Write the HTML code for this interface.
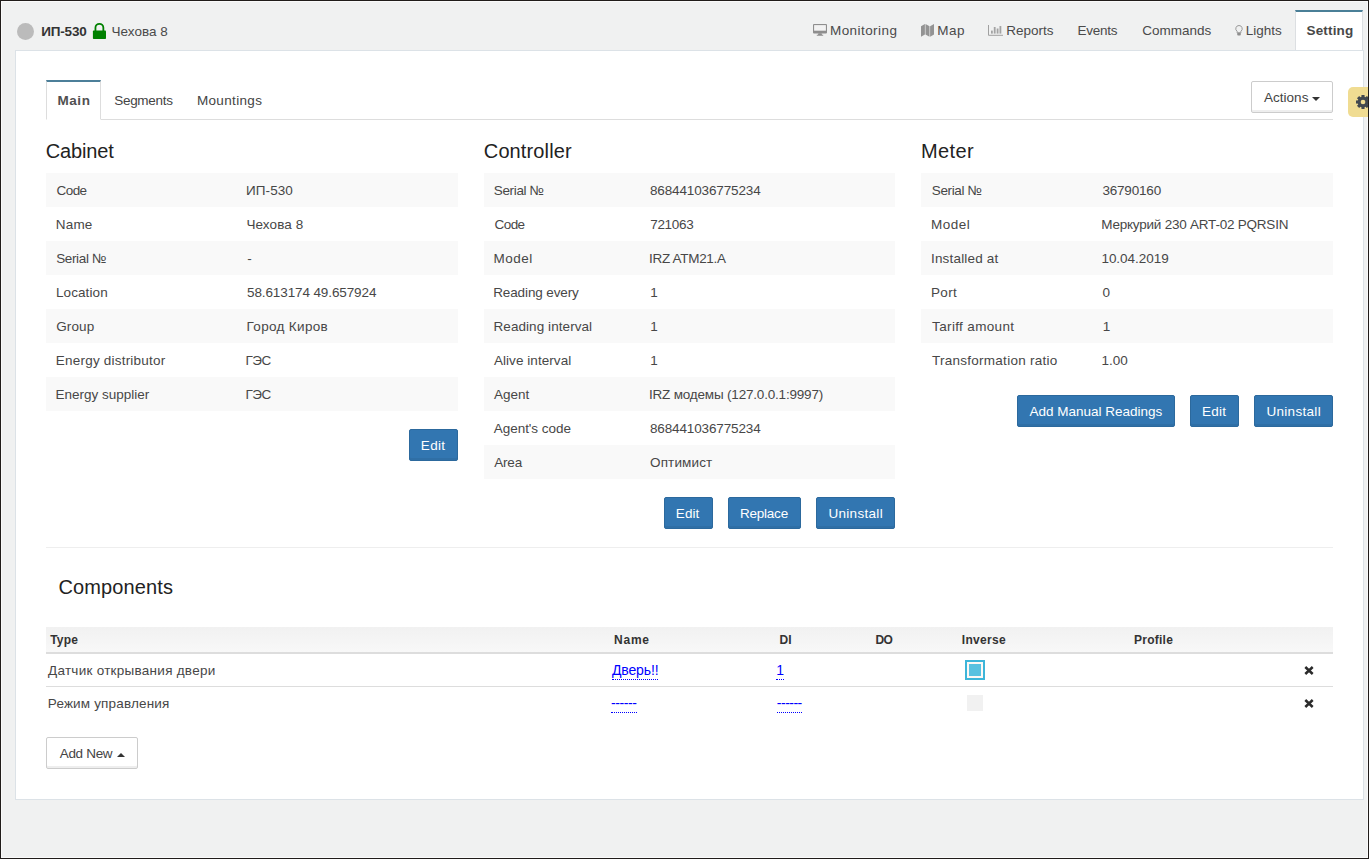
<!DOCTYPE html>
<html lang="en">
<head>
<meta charset="utf-8">
<title>ИП-530 Чехова 8 — Setting</title>
<style>
*{box-sizing:border-box;margin:0;padding:0}
html,body{width:1369px;height:859px;overflow:hidden}
body{background:#f0f1f1;font-family:"Liberation Sans","DejaVu Sans",sans-serif;font-size:13.5px;color:#3a3a3a;position:relative}
#frame{position:absolute;left:0;top:0;width:1369px;height:859px;border:1px solid #201c1a;box-shadow:inset 0 0 0 1px #fafafa;pointer-events:none;z-index:50}
a{text-decoration:none;color:inherit}
/* header */
#hdr{position:absolute;left:0;top:0;width:1369px;height:51px}
#dot{position:absolute;left:16.9px;top:22.9px;width:17.5px;height:17.5px;border-radius:50%;background:#bbb}
#devcode{position:absolute;left:41px;top:23px;font-weight:bold;font-size:13.5px;line-height:18px;color:#333}
#lock{position:absolute;left:92px;top:22px;width:15px;height:18px}
#devname{position:absolute;left:112px;top:23px;font-size:13.5px;line-height:18px;color:#4a4a4a}
#nav{position:absolute;left:0;top:10px;height:41px;width:1369px;list-style:none}
#nav li{position:absolute;top:0;height:41px;font-size:13.5px;color:#4a4a4a;white-space:nowrap;border-top:2px solid transparent}
#nav li span{position:absolute;top:10px;line-height:18px}
#nav li.act{background:#fff;height:40px;border:1px solid #dcdfe2;border-top:2px solid #4a7f97;border-bottom:none;font-weight:bold;color:#484848}
#nav svg{position:absolute}
/* panel */
#panel{position:absolute;left:15px;top:50px;width:1349px;height:750px;background:#fff;border:1px solid #dce2e7}
#gear{position:absolute;left:1348px;top:87px;width:20px;height:30px;overflow:hidden;background:#f0dc92;border-radius:5px 0 0 5px;z-index:60}
#gear svg{position:absolute;left:7.2px;top:6.9px}
/* tabs */
#tabs{position:absolute;left:46px;top:80px;width:1287px;height:40px;border-bottom:1px solid #ddd;list-style:none}
#tabs li{position:absolute;top:0;height:40px;font-size:13.5px;color:#444;border:1px solid transparent;border-top:2px solid transparent;white-space:nowrap}
#tabs li span{position:absolute;top:10px;line-height:18px}
#tabs li.act{background:#fff;border:1px solid #ddd;border-top:2px solid #4c7f99;border-bottom:1px solid #fff;font-weight:bold;color:#505050}
.btnw{position:absolute;background:#fff;border:1px solid #ccc;border-radius:2px;color:#444;font-size:13.5px;text-align:center;box-shadow:inset 0 -2px 0 #eee}
.btnw>span:first-child{position:relative;top:1px}
.caret{position:relative;top:2px;display:inline-block;width:0;height:0;border-left:4px solid transparent;border-right:4px solid transparent;vertical-align:middle;margin-left:4px}
.caret.dn{border-top:4px solid #333}
.caret.up{border-bottom:4px solid #333}
h3{position:absolute;font-weight:normal;font-size:20px;line-height:24px;color:#222}
table.kv{position:absolute;border-collapse:collapse;table-layout:fixed}
table.kv td{height:34px;padding:0 10px;font-size:13.5px;color:#474747;vertical-align:middle;white-space:nowrap}
table.kv tr:nth-child(odd) td{background:#f9f9f9}
.btn{position:absolute;height:32px;line-height:32px;background:#3276b1;border:1px solid #2c699d;border-radius:2px;box-shadow:inset 0 -2px 0 rgba(0,0,0,.06);color:#fff;font-size:13.5px;text-align:center;white-space:nowrap}
#hr{position:absolute;left:46px;top:547px;width:1287px;height:1px;background:#eee}
/* components */
#ctable{position:absolute;left:46px;top:627px;width:1287px;border-collapse:collapse;table-layout:fixed}
#ctable th{height:26px;text-align:left;font-size:12px;font-weight:bold;color:#333;padding:0 4px;background:linear-gradient(#f1f1f1,#f8f8f8);border-bottom:2px solid #ddd;padding-top:1px}
#ctable td{height:33px;font-size:13.5px;color:#474747;padding:0 2px;border-bottom:1px solid #ddd;vertical-align:middle}
#ctable tr:last-child td{border-bottom:none}
#ctable td span{position:relative;top:1px}
#ctable td a{position:relative;top:0}
#ctable a.ed{color:#00f;border-bottom:1px dotted #00f;font-size:14px;padding-bottom:1px}
.cb,.xi{display:block;position:relative}
#cb1{left:5px;top:0}
#cb2{left:7px;top:0}
.xi{left:6.1px;top:0.9px}
/*LS-START*/
#k1{letter-spacing:-0.58px;position:relative;left:0.6px}
#k2{letter-spacing:0.05px;position:relative;left:-0.9px}
#k3{letter-spacing:0.17px;position:relative;left:-0.2px}
#k4{letter-spacing:0.11px;position:relative;left:-0.6px}
#k5{letter-spacing:-0.36px;position:relative;left:0.2px}
#k6{position:relative;left:0.2px}
#k7{letter-spacing:0.11px;position:relative;left:-0.1px}
#k8{letter-spacing:-0.11px}
#k9{letter-spacing:0.12px;position:relative;left:0.2px}
#k10{letter-spacing:0.33px;position:relative;left:-0.4px}
#k11{letter-spacing:0.21px;position:relative;left:-0.2px}
#k12{letter-spacing:-0.60px;position:relative;left:-1.4px}
#k13{position:relative;left:-0.5px}
#k14{letter-spacing:-0.60px;position:relative;left:-1.4px}
#k15{letter-spacing:-0.36px;position:relative;left:-0.2px}
#k16{letter-spacing:-0.14px}
#k17{letter-spacing:-0.58px;position:relative;left:0.6px}
#k18{letter-spacing:-0.30px;position:relative;left:0.2px}
#k19{letter-spacing:0.50px;position:relative;left:-0.5px}
#k20{letter-spacing:-0.30px;position:relative;left:-1.0px}
#k21{letter-spacing:-0.12px;position:relative;left:-0.8px}
#k22{position:relative;left:0.2px}
#k23{letter-spacing:0.07px;position:relative;left:-0.5px}
#k24{position:relative;left:0.2px}
#k25{letter-spacing:0.06px;position:relative;left:-0.1px}
#k26{position:relative;left:0.2px}
#k28{letter-spacing:-0.19px;position:relative;left:-1.0px}
#k29{letter-spacing:-0.05px;position:relative;left:-0.2px}
#k30{letter-spacing:-0.14px}
#k31{letter-spacing:-0.17px;position:relative;left:0.2px}
#k32{letter-spacing:0.14px}
#k33{letter-spacing:-0.36px;position:relative;left:0.8px}
#k34{letter-spacing:-0.18px;position:relative;left:0.4px}
#k35{letter-spacing:0.50px}
#k36{letter-spacing:-0.22px;position:relative;left:-0.8px}
#k37{letter-spacing:0.18px}
#k38{letter-spacing:-0.03px;position:relative;left:-0.6px}
#k39{letter-spacing:0.33px}
#k40{position:relative;left:0.5px}
#k41{letter-spacing:0.35px;position:relative;left:1.1px}
#k42{position:relative;left:0.8px}
#k43{letter-spacing:0.26px;position:relative;left:1.0px}
#k44{position:relative;left:-0.5px}
#h1{letter-spacing:-0.18px;position:relative;left:0.2px}
#h2{letter-spacing:-0.01px;position:relative;left:-0.4px}
#n1{letter-spacing:0.43px;margin-left:-1.0px}
#n2{letter-spacing:0.55px;margin-left:-0.8px}
#n3{letter-spacing:0.01px;margin-left:-0.8px}
#n4{letter-spacing:-0.25px;margin-left:-0.6px}
#n5{margin-left:0.2px}
#n6{margin-left:-1.2px}
#n7{letter-spacing:0.17px;margin-left:-0.5px}
#t1{letter-spacing:0.58px;margin-left:0.4px}
#t2{letter-spacing:-0.29px;margin-left:-0.8px}
#t3{letter-spacing:0.34px;margin-left:-2.1px}
#g1{letter-spacing:-0.15px;position:relative;left:-0.3px}
#g2{letter-spacing:0.12px;position:relative;left:-0.2px}
#g3{letter-spacing:0.38px}
#g4{letter-spacing:0.11px;position:relative;left:-0.5px}
#b0{letter-spacing:0.03px;position:relative;left:0.2px}
#b1{letter-spacing:0.33px;position:relative;left:-0.4px}
#b2{letter-spacing:0.08px;position:relative;left:-0.9px}
#b3{letter-spacing:-0.21px;position:relative;left:-0.6px}
#b4{letter-spacing:0.31px;position:relative;left:0.2px}
#b5{letter-spacing:-0.01px;position:relative;left:-0.1px}
#b6{letter-spacing:0.25px;position:relative;left:-0.4px}
#b7{letter-spacing:0.31px;position:relative;left:0.2px}
#b9{letter-spacing:-0.33px}
#c1{letter-spacing:0.17px;position:relative;left:0.2px}
#c2{letter-spacing:0.75px;position:relative;left:0.1px}
#c3{position:relative;left:0.5px}
#c4{letter-spacing:-0.60px;position:relative;left:0.5px}
#c5{letter-spacing:0.32px;position:relative;left:-0.2px}
#c6{letter-spacing:0.25px}
#c7{letter-spacing:0.27px}
#c8{letter-spacing:0.17px;position:relative;left:-0.2px}
#c9{letter-spacing:-0.12px;position:relative;left:-0.1px}
#c10{position:relative;left:-0.8px}
#c11{letter-spacing:-0.40px;position:relative;left:-1.0px}
#c12{letter-spacing:-0.50px;position:relative;left:-0.2px}
/*LS-END*/
</style>
</head>
<body>
<div id="frame"></div>
<div id="hdr">
  <div id="dot"></div>
  <div id="devcode"><span id="h1">ИП-530</span></div>
  <svg id="lock" viewBox="0 0 15 18"><path d="M3.45 9.5V5.8a3.95 3.95 0 0 1 7.9 0V9.5" fill="none" stroke="#008000" stroke-width="1.8"/><rect x="0.9" y="8.6" width="13.1" height="8.4" rx="0.8" fill="#008000"/></svg>
  <div id="devname"><span id="h2">Чехова 8</span></div>
  <ul id="nav">
    <li style="left:801px;width:108px"><svg style="left:12px;top:12px" width="14" height="12" viewBox="0 0 14 12"><path d="M1 0h12a1 1 0 0 1 1 1v7.4a1 1 0 0 1-1 1h-12a1 1 0 0 1-1-1v-7.4a1 1 0 0 1 1-1z" fill="#8e8e8e"/><rect x="1.1" y="1.1" width="11.8" height="5.6" fill="#f2f2f2"/><path d="M5.4 9.2h3.2l0.4 1.5h1.2v1.1h-6.4v-1.1h1.2z" fill="#8e8e8e"/></svg><span id="n1" style="left:30px">Monitoring</span></li>
    <li style="left:909px;width:67px"><svg style="left:12px;top:12px" width="13" height="13" viewBox="0 0 13 13"><path d="M0 2.3l3.9-2.3v10.4l-3.9 2.3zM4.5 0l4 2.3v10.4l-4-2.3zM9.1 2.3l3.9-2.3v10.4l-3.9 2.3z" fill="#939393"/></svg><span id="n2" style="left:29px">Map</span></li>
    <li style="left:976px;width:89px"><svg style="left:12px;top:13px" width="15" height="11" viewBox="0 0 15 11"><path d="M0.5 0v10.3h14.5" fill="none" stroke="#a0a0a0" stroke-width="1"/><rect x="3" y="5.6" width="1.8" height="3" fill="#a3a3a3"/><rect x="5.8" y="2" width="1.8" height="6.6" fill="#a3a3a3"/><rect x="8.7" y="3.5" width="1.8" height="5.1" fill="#a3a3a3"/><rect x="11.5" y="1" width="1.8" height="7.6" fill="#a3a3a3"/></svg><span id="n3" style="left:31px">Reports</span></li>
    <li style="left:1066px;width:63px"><span id="n4" style="left:12px">Events</span></li>
    <li style="left:1130px;width:93px"><span id="n5" style="left:12px">Commands</span></li>
    <li style="left:1223px;width:71px"><svg style="left:12px;top:13px" width="8" height="11" viewBox="0 0 8 11"><path d="M4 0.5a3.2 3.2 0 0 0-1.9 5.8v1.5h3.8v-1.5a3.2 3.2 0 0 0-1.9-5.8z" fill="none" stroke="#999" stroke-width="1"/><rect x="2.2" y="7.8" width="3.6" height="2.7" rx="0.9" fill="#8e8e8e"/></svg><span id="n6" style="left:24px">Lights</span></li>
    <li class="act" style="left:1295px;width:68px"><span id="n7" style="left:11px">Setting</span></li>
  </ul>
</div>
<div id="panel"></div>
<div id="gear"><svg width="16" height="16" viewBox="-8 -8 16 16"><g fill="#434950"><rect x="-1.55" y="-7" width="3.1" height="3" transform="rotate(0)"/><rect x="-1.55" y="-7" width="3.1" height="3" transform="rotate(45)"/><rect x="-1.55" y="-7" width="3.1" height="3" transform="rotate(90)"/><rect x="-1.55" y="-7" width="3.1" height="3" transform="rotate(135)"/><rect x="-1.55" y="-7" width="3.1" height="3" transform="rotate(180)"/><rect x="-1.55" y="-7" width="3.1" height="3" transform="rotate(225)"/><rect x="-1.55" y="-7" width="3.1" height="3" transform="rotate(270)"/><rect x="-1.55" y="-7" width="3.1" height="3" transform="rotate(315)"/></g><circle r="3.9" fill="none" stroke="#434950" stroke-width="3.1"/></svg></div>

<ul id="tabs">
  <li class="act" style="left:0;width:55px"><span id="t1" style="left:10px">Main</span></li>
  <li style="left:56px;width:83px"><span id="t2" style="left:12px">Segments</span></li>
  <li style="left:140px;width:88px"><span id="t3" style="left:12px">Mountings</span></li>
</ul>
<div class="btnw" style="left:1251px;top:81px;width:82px;height:32px;line-height:30px"><span id="b0">Actions</span><span class="caret dn"></span></div>

<h3 style="left:46px;top:139px"><span id="g1">Cabinet</span></h3>
<table class="kv" style="left:46px;top:173px;width:412px">
  <colgroup><col style="width:191px"><col></colgroup>
  <tr><td><span id="k1">Code</span></td><td><span id="k2">ИП-530</span></td></tr>
  <tr><td><span id="k3">Name</span></td><td><span id="k4">Чехова 8</span></td></tr>
  <tr><td><span id="k5">Serial №</span></td><td><span id="k6">-</span></td></tr>
  <tr><td><span id="k7">Location</span></td><td><span id="k8">58.613174 49.657924</span></td></tr>
  <tr><td><span id="k9">Group</span></td><td><span id="k10">Город Киров</span></td></tr>
  <tr><td><span id="k11">Energy distributor</span></td><td><span id="k12">ГЭС</span></td></tr>
  <tr><td><span id="k13">Energy supplier</span></td><td><span id="k14">ГЭС</span></td></tr>
</table>
<div class="btn" style="left:409px;top:429px;width:49px"><span id="b1">Edit</span></div>

<h3 style="left:484px;top:139px"><span id="g2">Controller</span></h3>
<table class="kv" style="left:484px;top:173px;width:411px">
  <colgroup><col style="width:156px"><col></colgroup>
  <tr><td><span id="k15">Serial №</span></td><td><span id="k16">868441036775234</span></td></tr>
  <tr><td><span id="k17">Code</span></td><td><span id="k18">721063</span></td></tr>
  <tr><td><span id="k19">Model</span></td><td><span id="k20">IRZ ATM21.A</span></td></tr>
  <tr><td><span id="k21">Reading every</span></td><td><span id="k22">1</span></td></tr>
  <tr><td><span id="k23">Reading interval</span></td><td><span id="k24">1</span></td></tr>
  <tr><td><span id="k25">Alive interval</span></td><td><span id="k26">1</span></td></tr>
  <tr><td><span id="k27">Agent</span></td><td><span id="k28">IRZ модемы (127.0.0.1:9997)</span></td></tr>
  <tr><td><span id="k29">Agent's code</span></td><td><span id="k30">868441036775234</span></td></tr>
  <tr><td><span id="k31">Area</span></td><td><span id="k32">Оптимист</span></td></tr>
</table>
<div class="btn" style="left:664px;top:497px;width:49px"><span id="b2">Edit</span></div>
<div class="btn" style="left:728px;top:497px;width:73px"><span id="b3">Replace</span></div>
<div class="btn" style="left:816px;top:497px;width:79px"><span id="b4">Uninstall</span></div>

<h3 style="left:921px;top:139px"><span id="g3">Meter</span></h3>
<table class="kv" style="left:921px;top:173px;width:412px">
  <colgroup><col style="width:171px"><col></colgroup>
  <tr><td><span id="k33">Serial №</span></td><td><span id="k34">36790160</span></td></tr>
  <tr><td><span id="k35">Model</span></td><td><span id="k36">Меркурий 230 ART-02 PQRSIN</span></td></tr>
  <tr><td><span id="k37">Installed at</span></td><td><span id="k38">10.04.2019</span></td></tr>
  <tr><td><span id="k39">Port</span></td><td><span id="k40">0</span></td></tr>
  <tr><td><span id="k41">Tariff amount</span></td><td><span id="k42">1</span></td></tr>
  <tr><td><span id="k43">Transformation ratio</span></td><td><span id="k44">1.00</span></td></tr>
</table>
<div class="btn" style="left:1017px;top:395px;width:158px"><span id="b5">Add Manual Readings</span></div>
<div class="btn" style="left:1190px;top:395px;width:49px"><span id="b6">Edit</span></div>
<div class="btn" style="left:1254px;top:395px;width:79px"><span id="b7">Uninstall</span></div>

<div id="hr"></div>
<h3 style="left:59px;top:575px"><span id="g4">Components</span></h3>

<table id="ctable">
  <colgroup><col style="width:564px"><col style="width:165px"><col style="width:96px"><col style="width:87px"><col style="width:172px"><col style="width:166px"><col></colgroup>
  <tr><th><span id="c1">Type</span></th><th><span id="c2">Name</span></th><th><span id="c3">DI</span></th><th><span id="c4">DO</span></th><th><span id="c5">Inverse</span></th><th><span id="c6">Profile</span></th><th></th></tr>
  <tr><td><span id="c7">Датчик открывания двери</span></td><td><a class="ed" id="c9">Дверь!!</a></td><td><a class="ed" id="c10">1</a></td><td></td><td><svg class="cb" id="cb1" width="20" height="20" viewBox="0 0 20 20"><rect x="1" y="1" width="18" height="18" fill="#fdf8f5" stroke="#3db5d9" stroke-width="2"/><rect x="4" y="4" width="12" height="12" fill="#58c1e0"/></svg></td><td></td><td><svg class="xi" id="x1" width="10" height="9" viewBox="0 0 10 9"><path d="M1.3 1L8.7 8M8.7 1L1.3 8" stroke="#2b2b2b" stroke-width="2.5" fill="none"/></svg></td></tr>
  <tr><td><span id="c8">Режим управления</span></td><td><a class="ed" id="c11">------</a></td><td><a class="ed" id="c12">------</a></td><td></td><td><svg class="cb" id="cb2" width="16" height="16" viewBox="0 0 16 16"><rect x="0" y="0" width="16" height="16" fill="#f1f1f1"/></svg></td><td></td><td><svg class="xi" id="x2" width="10" height="9" viewBox="0 0 10 9"><path d="M1.3 1L8.7 8M8.7 1L1.3 8" stroke="#2b2b2b" stroke-width="2.5" fill="none"/></svg></td></tr>
</table>
<div class="btnw" style="left:46px;top:737px;width:92px;height:32px;line-height:30px"><span id="b9">Add New</span><span class="caret up" style="left:1px"></span></div>
</body>
</html>
